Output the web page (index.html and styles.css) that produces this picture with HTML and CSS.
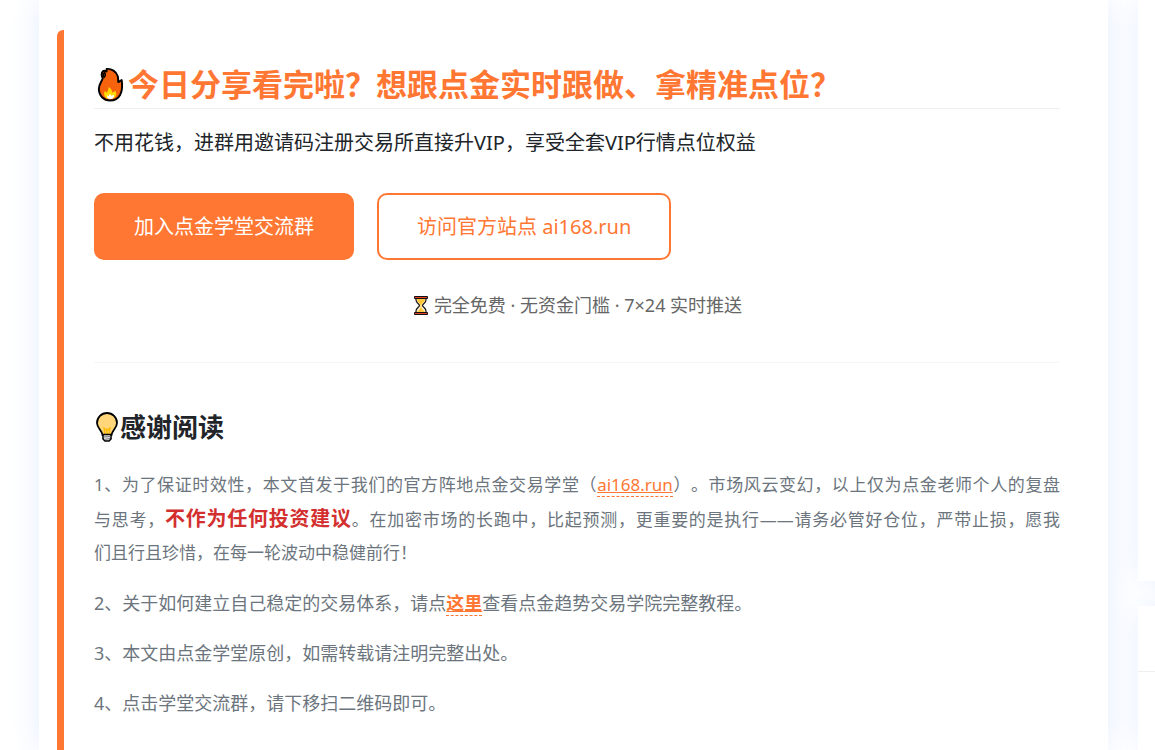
FILE: index.html
```html
<!DOCTYPE html>
<html lang="zh-CN">

<head>
    <meta charset="UTF-8">
    <meta name="viewport" content="width=device-width, initial-scale=1.0">
    <link rel="stylesheet" href="styles.css">
    <title>点金学堂</title>
</head>

<body>
    <div class="layout">
        <main class="article">
            <div class="cta-box">
                <h2 class="cta-title">
                    <svg class="icon-fire" viewBox="0 0 35 36" aria-hidden="true">
                        <path d="M13 2.5 C18 2 23 5 24.500 10 C25 13 25 14 25 16 L28.500 14 C29.500 20 29 25 27 29 C24.500 33.500 20.500 35 16.500 35 C10 35 5 30 5 23 C5 18 8 15.500 9 12 C7.500 10 7.500 6.500 9 5 C10 4 12 4.500 13 5 Z" fill="#f7630c" stroke="#000" stroke-width="2" stroke-linejoin="round"/>
                        <path d="M11 6 C8.500 8 9.500 10 10.500 11 C12 9.500 12 8 11 6 Z" fill="#f7630c" stroke="#000" stroke-width="1.500"/>
                        <path d="M15 21 C17 22 18.500 24 19 27 L22 25 C24.500 29 22 33.500 16.500 33.500 C11 33.500 9.500 29 11 25.500 C12 26 13 26.500 13 27 C14.500 25 15 23 15 21 Z" fill="#ffd800"/>
                        <path d="M16 28 L18 30 L20.500 29 C21 32 19 33.500 17 33.500 C14 33.500 13 31.500 13.500 29.500 L15 30.500 Z" fill="#fff"/>
                    </svg>今日分享看完啦？想跟点金实时跟做、拿精准点位？
                </h2>
                <p class="cta-text">不用花钱，进群用邀请码注册交易所直接升VIP，享受全套VIP行情点位权益</p>
                <div class="buttons">
                    <a class="btn btn-main" href="#">加入点金学堂交流群</a>
                    <a class="btn btn-line" href="#">访问官方站点 ai168.run</a>
                </div>
                <p class="cta-note">
                    <svg class="icon-glass" viewBox="0 0 18 22" aria-hidden="true">
                        <path d="M4 4 V6 C4 9 7.500 10 7.500 11.500 C7.500 13 4 14 4 17 V19 H14 V17 C14 14 10.500 13 10.500 11.500 C10.500 10 14 9 14 6 V4 Z" fill="#fff3d8" stroke="#111" stroke-width="1.200"/>
                        <path d="M5 5 H13 C13 8.500 9.500 9.500 9.500 11.500 V14 L13 18 H5 L8.500 14 V11.500 C8.500 9.500 5 8.500 5 5 Z" fill="#ffc83d"/>
                        <path d="M2.500 2.500 H15.500 V4.500 H2.500 Z M2.500 18.500 H15.500 V20.500 H2.500 Z" fill="#e8412a" stroke="#111"/>
                    </svg>
                    完全免费 · 无资金门槛 · 7×24 实时推送
                </p>
                <hr class="divider">
                <h3 class="thanks-title">
                    <svg class="icon-bulb" viewBox="0 0 26 32" aria-hidden="true">
                        <path d="M13 2 C18.500 2 23 6.500 23 12 C23 17 18 19.500 17.500 24 H8.500 C8 19.500 3 17 3 12 C3 6.500 7.500 2 13 2 Z" fill="#ffd679" stroke="#000" stroke-width="1.800"/>
                        <path d="M10.500 23 V18 L9.500 16.500 M15.500 23 V18 L16.500 16.500 M10.500 18.500 H15.500 M13 18 V23" fill="none" stroke="#ffb900" stroke-width="1.500"/>
                        <path d="M9 23.500 H17 V28 L15 30 H11 L9 28 Z" fill="#e6e6e6" stroke="#000" stroke-width="1.600"/>
                        <path d="M9.500 26 L16.500 25.500 M10 28.500 L16 27.500" stroke="#777"/>
                    </svg>感谢阅读
                </h3>
                <div class="notes">
                    <p class="notes-long">1、为了保证时效性，本文首发于我们的官方阵地点金交易学堂（<a href="#">ai168.run</a>）。市场风云变幻，以上仅为点金老师个人的复盘<span class="keep">与思考</span>，<strong>不作为任何投资建议</strong>。在加密市场的长跑中，比起预测，更重要的是执行——请务必管好仓位，严带止损，愿我<span class="keep">们且行且珍惜</span>，在每一轮波动中稳健前行！</p>
                    <p>2、关于如何建立自己稳定的交易体系，请点<a class="bold" href="#">这里</a>查看点金趋势交易学院完整教程。</p>
                    <p>3、本文由点金学堂原创，如需转载请注明完整出处。</p>
                    <p>4、点击学堂交流群，请下移扫二维码即可。</p>
                </div>
            </div>
        </main>
        <aside class="sidebar">
            <div class="panel panel-top"></div>
            <div class="panel panel-bottom">
                <div class="panel-head"></div>
            </div>
        </aside>
    </div>
</body>

</html>
```
FILE: styles.css
```css
* {
    box-sizing: border-box;
}

body {
    margin: 0;
    background-color: #fff;
    font-family: "Noto Sans", "Noto Sans CJK SC", sans-serif;
    color: #212529;
    overflow: hidden;
    text-spacing-trim: space-all;
}

.layout {
    display: flex;
    gap: 30px;
    min-height: 100vh;
    padding-left: 39px;
}

.article {
    flex: 1;
    padding: 30px 18px 0;
    background-color: #fff;
    box-shadow: 0 0 30px #e4edff;
    display: flex;
}

.cta-box {
    flex: 1;
    padding: 30px 30px 0;
    border-left: 7px solid #ff7733;
    border-top-left-radius: 6px;
}

.cta-title {
    display: flex;
    align-items: center;
    margin: 0 0 16px;
    padding: 2px 0;
    border-bottom: 1px solid #eee;
    font-size: 31px;
    line-height: 44px;
    color: #ff7733;
}

.icon-fire {
    width: 34px;
    height: 36px;
}

.cta-text {
    margin: 0 0 32px;
    font-size: 20px;
    line-height: 36px;
}

.buttons {
    display: flex;
    gap: 23px;
    margin-bottom: 29px;
}

.btn {
    padding: 16px 38px;
    border: 2px solid #ff7733;
    border-radius: 10px;
    font-size: 20px;
    line-height: 31px;
    text-decoration: none;
}

.btn-main {
    background-color: #ff7733;
    color: #fff;
}

.btn-line {
    color: #ff7733;
}

.cta-note {
    display: flex;
    align-items: center;
    justify-content: center;
    gap: 4px;
    margin: 0 0 41px;
    font-size: 18px;
    line-height: 32px;
    color: #666;
}

.icon-glass {
    width: 18px;
    height: 22px;
}

.divider {
    margin: 0 0 45px;
    border: 0;
    border-top: 1px solid #f6f6f6;
}

.thanks-title {
    display: flex;
    align-items: center;
    margin: 0 0 23px;
    font-size: 26px;
    line-height: 38px;
}

.icon-bulb {
    width: 26px;
    height: 32px;
}

.notes {
    font-size: 18px;
    line-height: 32px;
    color: #6c757d;
}

.notes p {
    margin: 0 0 18px;
}

.notes .notes-long {
    font-size: 17px;
    text-align: justify;
}

.keep {
    white-space: nowrap;
}

.notes strong {
    font-size: 20px;
    line-height: 36px;
    color: #d32f2f;
}

.notes a {
    color: #ff7733;
    border-bottom: 1px dashed #ff7733;
}

.bold {
    font-weight: bold;
}

.sidebar {
    flex: 0 0 17px;
    display: flex;
    flex-direction: column;
    gap: 25px;
}

.panel {
    /* the panels run past the right window edge */
    margin-right: -40px;
    background-color: #fff;
    box-shadow: 0 0 30px #e8f0ff;
}

.panel-top {
    height: 581px;
}

.panel-bottom {
    flex: 1;
}

.panel-head {
    height: 66px;
    border-bottom: 1px solid #eee;
}
```
